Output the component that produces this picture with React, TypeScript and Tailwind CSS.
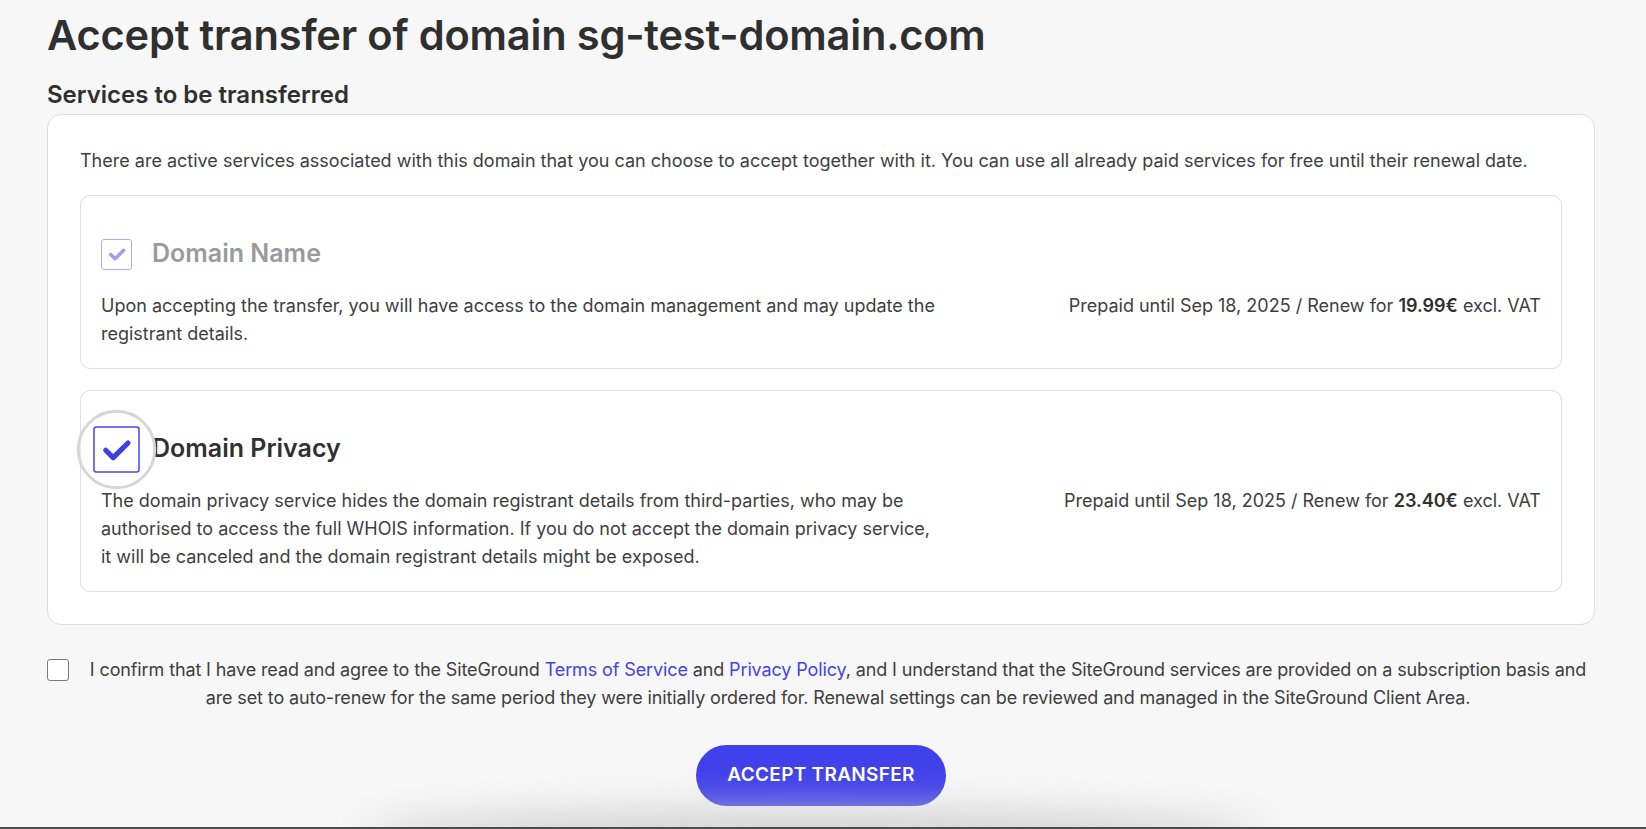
import { useState } from 'react';

const HEAD = "font-['Inter','Noto_Sans',sans-serif]";

function CheckMark({ className, weight = 3.6 }: { className?: string; weight?: number }) {
  return (
    <svg viewBox="0 0 24 24" className={className} fill="none">
      <path d="M4.5 12.5l5.2 5.2L20 7.5" stroke="currentColor" strokeWidth={weight} strokeLinecap="round" strokeLinejoin="round" />
    </svg>
  );
}

interface ServiceProps {
  title: string;
  prepaid: string;
  renew: string;
  disabled?: boolean;
  focused?: boolean;
  children: React.ReactNode;
}

function ServiceCard({ title, prepaid, renew, disabled, focused, children }: ServiceProps) {
  return (
    <div className="bg-white border border-[#dedede] rounded-[10px] p-5">
      {/* header: checkbox + name */}
      <div className="flex items-center gap-5 h-[76px]">
        {disabled ? (
          <div className="w-[31px] h-[31px] rounded-[3px] border-[1.5px] border-[#b0acf3] flex items-center justify-center shrink-0">
            <CheckMark className="w-[20px] h-[20px] text-[#a39ef2]" weight={4.2} />
          </div>
        ) : (
          <div className="relative w-[31px] h-[31px] shrink-0 scale-150">
            {focused && (
              <div className="absolute -left-[11px] -top-[11px] w-[53px] h-[53px] rounded-full border-2 border-[#d6d6d6] bg-white/40" />
            )}
            <div className="relative w-[31px] h-[31px] rounded-[2px] border-[1.5px] border-[#4646e6] bg-white flex items-center justify-center">
              <CheckMark className="w-[23px] h-[23px] text-[#3f3fe3]" />
            </div>
          </div>
        )}
        <div className={`${HEAD} text-[25px] font-semibold ${disabled ? 'text-[#9a9a9a]' : 'text-[#303030]'}`}>
          {title}
        </div>
      </div>

      {/* description + price */}
      <div className="flex justify-between gap-10 text-[18px] leading-[28px] text-[#3e3e3e]">
        <div className="w-[842px]">{children}</div>
        <div className="whitespace-nowrap">
          Prepaid until {prepaid} / Renew for <b className="font-semibold text-[#2f2f2f]">{renew}</b> excl. VAT
        </div>
      </div>
    </div>
  );
}

export default function App() {
  const [agreed, setAgreed] = useState(false);

  return (
    <div className="relative h-[829px] overflow-hidden bg-[#f7f7f7] font-['Inter',sans-serif] text-[#363636]">
      <div className="pl-[47px] pr-[51px] pt-[12px]">
        <h1 className={`${HEAD} text-[41.6px] leading-[46px] font-semibold text-[#2f2f2f] tracking-[-0.2px]`}>
          Accept transfer of domain sg-test-domain.com
        </h1>
        <h2 className={`${HEAD} mt-[23px] text-[24px] leading-[28px] font-semibold text-[#2f2f2f]`}>
          Services to be transferred
        </h2>

        {/* services */}
        <div className="mt-[5px] bg-white border border-[#dedede] rounded-[14px] px-[32px] pt-[32px] pb-[32px]">
          <p className="text-[18px] leading-[28px] text-[#3e3e3e]">
            There are active services associated with this domain that you can choose to accept together with it. You can use all already paid services for free until their renewal date.
          </p>
          <div className="mt-[20px] flex flex-col gap-[21px]">
            <ServiceCard title="Domain Name" disabled prepaid="Sep 18, 2025" renew="19.99€">
              Upon accepting the transfer, you will have access to the domain management and may update the registrant details.
            </ServiceCard>
            <ServiceCard title="Domain Privacy" focused prepaid="Sep 18, 2025" renew="23.40€">
              The domain privacy service hides the domain registrant details from third-parties, who may be authorised to access the full WHOIS information. If you do not accept the domain privacy service, it will be canceled and the domain registrant details might be exposed.
            </ServiceCard>
          </div>
        </div>

        {/* terms */}
        <div className="mt-[31px] flex items-start gap-3">
          <button
            type="button"
            onClick={() => setAgreed(!agreed)}
            className="mt-[3px] w-[22px] h-[22px] shrink-0 rounded-[3px] border-[1.5px] border-[#7a7a7a] bg-white flex items-center justify-center"
          >
            {agreed && <CheckMark className="w-[15px] h-[15px] text-[#3f3fe3]" />}
          </button>
          <p className="flex-1 text-center text-[18px] leading-[28px] text-[#3e3e3e] tracking-[-0.12px]">
            I confirm that I have read and agree to the SiteGround <span className="text-[#4343e6]">Terms of Service</span> and{' '}
            <span className="text-[#4343e6]">Privacy Policy</span>, and I understand that the SiteGround services are provided on a subscription basis and are set to auto-renew for the same period they were initially ordered for. Renewal settings can be reviewed and managed in the SiteGround Client Area.
          </p>
        </div>

        <div className="mt-[33px] flex justify-center">
          <button
            type="button"
            className={`${HEAD} w-[250px] h-[61px] rounded-full bg-[#4141eb] text-white text-[19px] font-semibold tracking-[0.3px]`}
          >
            ACCEPT TRANSFER
          </button>
        </div>
      </div>

      {/* bottom shadow of the floating bar below */}
      <div className="absolute left-[360px] right-[380px] bottom-[-30px] h-[52px] rounded-[50%] bg-[#cacaca] blur-[18px] opacity-75" />
      <div className="absolute left-0 right-0 bottom-0 h-[2px] bg-[#4b4b4b]" />
    </div>
  );
}
